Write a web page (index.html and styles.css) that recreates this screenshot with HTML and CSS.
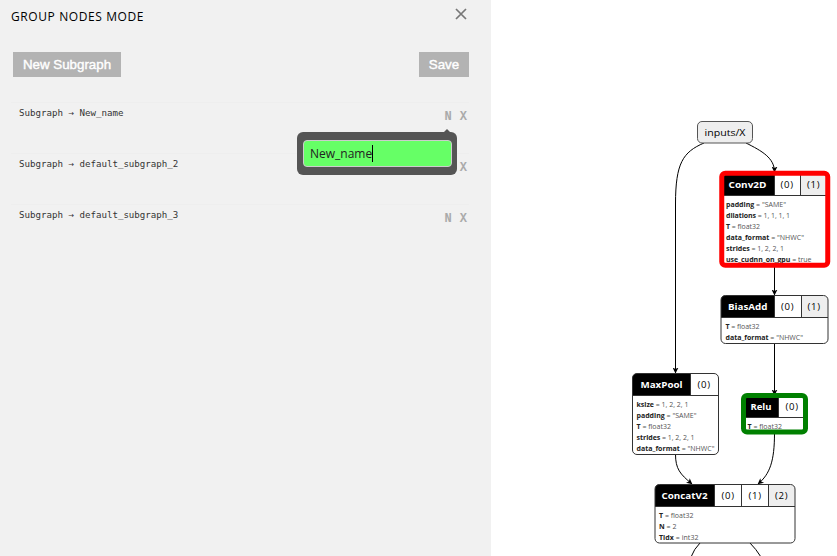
FILE: index.html
```html
<!DOCTYPE html>
<html lang="en">
<head>
<meta charset="utf-8">
<title>Group nodes mode</title>
<link rel="stylesheet" href="styles.css">
</head>
<body>
<div class="app">
  <aside class="panel">
    <header class="panel-head">
      <h1 class="title">GROUP NODES MODE</h1>
      <svg class="close" viewBox="0 0 12 12"><path d="M1 1L11 11M11 1L1 11"/></svg>
    </header>
    <div class="toolbar">
      <button class="btn btn-new">New Subgraph</button>
      <button class="btn btn-save">Save</button>
    </div>
    <ul class="list">
      <li class="item"><span class="name">Subgraph → New_name</span>
        <span class="actions"><b>N</b><b>X</b></span>
        <div class="popup"><div class="field"><span class="value">New_name</span><i class="caret"></i></div></div>
      </li>
      <li class="item"><span class="name">Subgraph → default_subgraph_2</span><span class="actions"><b>N</b><b>X</b></span></li>
      <li class="item"><span class="name">Subgraph → default_subgraph_3</span><span class="actions"><b>N</b><b>X</b></span></li>
    </ul>
  </aside>
  <main class="graph">
    <svg class="canvas" viewBox="491 0 346 556">
      <defs>
        <marker id="arrow" viewBox="0 0 6 6" refX="5.5" refY="3" markerWidth="6" markerHeight="6" markerUnits="userSpaceOnUse" orient="auto"><path d="M0 0L6 3L0 6L1.5 3Z"/></marker>
      </defs>
      <g class="edges">
        <path d="M704 143C683 152 675.5 163 675.5 204V373"/>
        <path d="M746 143C762 151 774.5 158 774.5 172"/>
        <path d="M774.5 266V295"/>
        <path d="M774.5 343V395"/>
        <path d="M675.5 454C675.5 469 680 474 692 484"/>
        <path d="M774.5 433C774.5 461 770 474 758 484"/>
        <path class="plain" d="M700 543Q694 549 691 557"/>
        <path class="plain" d="M750 543Q756 549 761 557"/>
      </g>

      <g class="node">
        <rect class="input" x="697.5" y="121.500" width="55" height="21.500" rx="4.500"/>
        <text class="port" x="704.500" y="136" textLength="41" lengthAdjust="spacingAndGlyphs">inputs/X</text>
      </g>

      <g class="node">
        <rect class="fill" x="721" y="174" width="107" height="91" rx="4"/>
        <rect class="head" x="722" y="174" width="52" height="21"/>
        <rect class="out" x="801" y="174" width="26" height="21"/>
        <path class="line" d="M722 195.500H827M774.500 174V195M800.500 174V195"/>
        <text class="op" x="728.500" y="188" textLength="38" lengthAdjust="spacingAndGlyphs">Conv2D</text>
        <text class="port" x="780.500" y="188" textLength="12.500">(0)</text>
        <text class="port" x="807" y="188" textLength="12.500">(1)</text>
        <text class="attr" x="726" y="207" textLength="60"><tspan>padding</tspan> = "SAME"</text>
        <text class="attr" x="726" y="218" textLength="64"><tspan>dilations</tspan> = 1, 1, 1, 1</text>
        <text class="attr" x="726" y="229" textLength="34"><tspan>T</tspan> = float32</text>
        <text class="attr" x="726" y="240" textLength="78"><tspan>data_format</tspan> = "NHWC"</text>
        <text class="attr" x="726" y="251" textLength="58"><tspan>strides</tspan> = 1, 2, 2, 1</text>
        <text class="attr" x="726" y="262" textLength="85.500"><tspan>use_cudnn_on_gpu</tspan> = true</text>
        <rect class="ring red" x="721.750" y="173.250" width="106" height="92" rx="3.500"/>
      </g>

      <g class="node">
        <rect class="fill" x="721" y="295.500" width="107" height="48" rx="4.500"/>
        <path class="head" d="M725 295.500H774V317H721V300Q721 295.500 725 295.500Z"/>
        <path class="out" d="M801 296H824Q828 296 828 300V317H801Z"/>
        <path class="line" d="M721 317.500H828M774.500 296V317M801.500 296V317"/>
        <rect class="outline" x="721" y="295.500" width="107" height="48" rx="4.500"/>
        <text class="op" x="728" y="310" textLength="39.500" lengthAdjust="spacingAndGlyphs">BiasAdd</text>
        <text class="port" x="781" y="310" textLength="12.500">(0)</text>
        <text class="port" x="807.500" y="310" textLength="12.500">(1)</text>
        <text class="attr" x="725.500" y="329" textLength="34"><tspan>T</tspan> = float32</text>
        <text class="attr" x="725.500" y="340" textLength="77.500"><tspan>data_format</tspan> = "NHWC"</text>
      </g>

      <g class="node">
        <rect class="fill" x="632.500" y="373.500" width="86" height="81" rx="4.500"/>
        <path class="head" d="M637 373.500H690V395H632.500V378Q632.500 373.500 637 373.500Z"/>
        <path class="line" d="M632.500 395.500H718.500M690.500 374V395"/>
        <rect class="outline" x="632.500" y="373.500" width="86" height="81" rx="4.500"/>
        <text class="op" x="640.500" y="388" textLength="42" lengthAdjust="spacingAndGlyphs">MaxPool</text>
        <text class="port" x="697.500" y="388" textLength="12.500">(0)</text>
        <text class="attr" x="636.500" y="407" textLength="52"><tspan>ksize</tspan> = 1, 2, 2, 1</text>
        <text class="attr" x="636.500" y="418" textLength="60"><tspan>padding</tspan> = "SAME"</text>
        <text class="attr" x="636.500" y="429" textLength="34.500"><tspan>T</tspan> = float32</text>
        <text class="attr" x="636.500" y="440" textLength="58"><tspan>strides</tspan> = 1, 2, 2, 1</text>
        <text class="attr" x="636.500" y="451" textLength="78"><tspan>data_format</tspan> = "NHWC"</text>
      </g>

      <g class="node">
        <rect class="fill" x="743" y="395" width="63" height="37" rx="4"/>
        <rect class="head" x="743" y="395" width="35" height="22"/>
        <path class="line" d="M743 417.500H806M778.500 396V417"/>
        <text class="op" x="750.500" y="410" textLength="21" lengthAdjust="spacingAndGlyphs">Relu</text>
        <text class="port" x="785.500" y="410" textLength="12.500">(0)</text>
        <text class="attr" x="747.500" y="429" textLength="34.500"><tspan>T</tspan> = float32</text>
        <rect class="ring green" x="743.500" y="395.500" width="62" height="36.500" rx="3.500"/>
      </g>

      <g class="node">
        <rect class="fill" x="655" y="484.500" width="140" height="58.500" rx="4.500"/>
        <path class="head" d="M659 484.500H714V506H655V489Q655 484.500 659 484.500Z"/>
        <path class="out" d="M769 485H791Q795 485 795 489V506H769Z"/>
        <path class="line" d="M655 506.500H795M714.500 485V506M741.500 485V506M768.500 485V506"/>
        <rect class="outline" x="655" y="484.500" width="140" height="58.500" rx="4.500"/>
        <text class="op" x="661.500" y="499" textLength="46" lengthAdjust="spacingAndGlyphs">ConcatV2</text>
        <text class="port" x="721.500" y="499" textLength="12.500">(0)</text>
        <text class="port" x="748.500" y="499" textLength="12.500">(1)</text>
        <text class="port" x="775" y="499" textLength="12.500">(2)</text>
        <text class="attr" x="659" y="518" textLength="34.500"><tspan>T</tspan> = float32</text>
        <text class="attr" x="659" y="529" textLength="17.500"><tspan>N</tspan> = 2</text>
        <text class="attr" x="659" y="540" textLength="39.500"><tspan>Tidx</tspan> = int32</text>
      </g>
    </svg>
  </main>
</div>
</body>
</html>
```
FILE: styles.css
```css
* { box-sizing: border-box; }
body { margin: 0; background: #fff; font-family: "Open Sans", sans-serif; overflow: hidden; }
.app { display: flex; width: 837px; height: 556px; }

.panel { width: 491px; background: #f1f1f1; }
.panel-head { display: flex; justify-content: space-between; align-items: flex-start; height: 52px; padding: 8px 24px 0 11px; }
.title { margin: 0; font-size: 12px; line-height: 17px; font-weight: 400; letter-spacing: 0.6px; color: #000; white-space: nowrap; }
.close { width: 12px; height: 12px; fill: none; stroke: #777; stroke-width: 1.7; }

.toolbar { display: flex; justify-content: space-between; height: 50px; padding: 0 22px 0 13px; }
.btn { height: 25px; padding: 0; border: 0; background: #b3b3b3; color: #fff; font: 400 13.33px/25px "Liberation Sans", sans-serif; -webkit-text-stroke: 0.4px #fff; }
.btn-new { width: 108px; }
.btn-save { width: 50px; }

.list { margin: 0 22px 0 11px; padding: 0; list-style: none; }
.item { position: relative; display: flex; justify-content: space-between; height: 51px; padding: 3px 2px 0 8px; border-top: 1px solid #eee; }
.name { font: 9.14px/14px "DejaVu Sans Mono", monospace; color: #333; white-space: pre; }
.actions { display: flex; gap: 8px; padding-top: 3px; font: 700 12px/17px "Liberation Mono", monospace; color: #aaa; }

.popup { position: absolute; z-index: 1; left: 286px; top: 29px; width: 160px; height: 43px; padding: 8px 5px 7px 6px; background: #555; border-radius: 6px; }
.popup::before { content: ""; position: absolute; left: 147px; top: -3px; border: solid transparent; border-width: 0 3px 3px; border-bottom-color: #555; }
.field { display: flex; align-items: center; height: 27px; padding-left: 6px; background: #6f6; border: 1px solid #ccc; border-radius: 4px; }
.value { font-size: 12px; line-height: 20px; color: #222; }
.caret { width: 1px; height: 17px; background: #000; }

.graph { width: 346px; }
.canvas { display: block; width: 346px; height: 556px; }
.edges path { fill: none; stroke: #000; stroke-width: 1; marker-end: url(#arrow); }
.edges .plain { marker-end: none; }
#arrow path { fill: #000; stroke: none; marker-end: none; }
.fill { fill: #fff; }
.input { fill: #eee; stroke: #555; }
.head { fill: #000; }
.out { fill: #eee; }
.line, .outline { fill: none; stroke: #333; stroke-width: 1; }
.ring { fill: none; stroke-width: 5; }
.red { stroke: #f00; }
.green { stroke: #008000; }
.op { font-size: 9.2px; font-weight: 700; fill: #fff; }
.port { font-size: 9.6px; fill: #000; }
.attr { font-size: 7px; fill: #555; }
.attr tspan { font-weight: 700; fill: #222; }
```
